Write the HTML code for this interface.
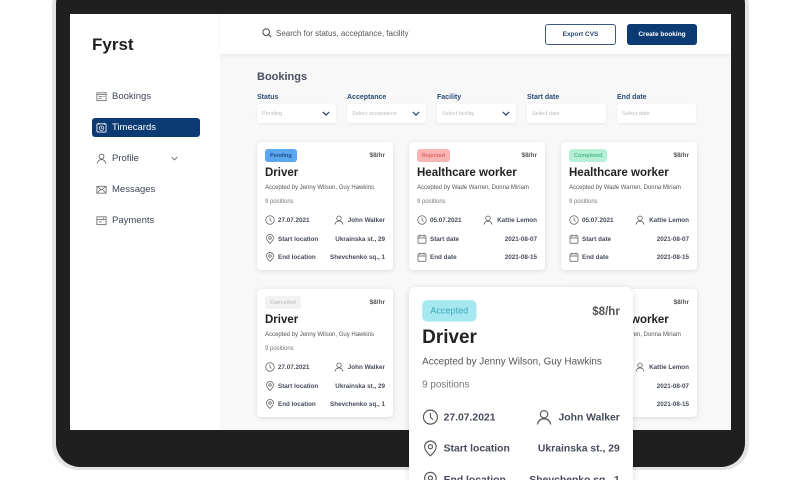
<!DOCTYPE html>
<html style="overflow:hidden;width:800px;height:480px"><head><meta charset="utf-8"><style>
*{margin:0;padding:0;box-sizing:border-box}
body{width:800px;height:480px;overflow:hidden;background:#fff;font-family:"Liberation Sans",sans-serif;position:relative;color:#333}
.abs{position:absolute}
#clip{position:absolute;left:0;top:0;width:800px;height:480px;overflow:hidden}
#outer{left:52px;top:-20px;width:697px;height:490px;background:#e4e4e4;border-radius:26px}
#bezel{left:56px;top:-20px;width:689px;height:487px;background:#1f1f1f;border-radius:24px}
#screen{left:70px;top:14px;width:661px;height:416px;background:#f8f8f8;overflow:hidden}
#side{left:0;top:0;width:150px;height:416px;background:#fff}
#head{left:150px;top:0;width:511px;height:40px;background:#fff;box-shadow:0 2px 5px rgba(0,0,0,.06)}
.nav{position:absolute;left:22px;width:108px;height:19px;font-size:9.5px;color:#3d4656;display:flex;align-items:center;padding-left:4px;gap:5px}
.nav svg{width:11px;height:11px}
.btn{position:absolute;top:10px;height:21px;border-radius:3px;font-size:6.5px;display:flex;align-items:center;justify-content:center;font-weight:bold}
.lbl{position:absolute;top:80px;font-size:7px;font-weight:bold;color:#2b4a75}
.inp{position:absolute;top:90px;width:79px;height:19px;background:#fff;border-radius:3px;box-shadow:0 1px 3px rgba(0,0,0,.07);font-size:5.5px;color:#bbb;padding-left:5px;display:flex;align-items:center}
.inp svg{position:absolute;right:6px;top:7px;width:8px;height:5px}
.card{position:absolute;width:136px;height:128px;background:#fff;border-radius:4px;box-shadow:0 1px 5px rgba(0,0,0,.12);color:#3b4250}
.card .bd{position:absolute;left:8px;top:7px;height:13px;padding:0 5px;border-radius:3px;font-size:5.5px;font-weight:bold;display:flex;align-items:center}
.card .pr{position:absolute;right:8px;top:10px;font-size:6.5px;font-weight:bold;color:#555}
.card .t{position:absolute;left:8px;top:25px;font-size:11.5px;font-weight:bold;color:#222}
.card .a{position:absolute;left:8px;top:43px;font-size:6px;color:#555;white-space:nowrap}
.card .p{position:absolute;left:8px;top:57px;font-size:6px;color:#777}
.card .r{position:absolute;left:8px;right:8px;height:12px;font-size:6.3px;font-weight:bold;color:#454c58;display:flex;align-items:center;white-space:nowrap}
.card .r svg{width:10px;height:10px;margin-right:3px;flex:none}
.card .r .rt{margin-left:auto;display:flex;align-items:center}
.card .r .rt svg{margin-right:4px}
</style></head><body>
<svg width="0" height="0" style="position:absolute">
<defs>
<symbol id="clk" viewBox="0 0 20 20"><circle cx="10" cy="10" r="8.5" fill="none" stroke="#555" stroke-width="1.4"/><path d="M10 5v5l3 3" fill="none" stroke="#555" stroke-width="1.4"/></symbol>
<symbol id="usr" viewBox="0 0 20 20"><circle cx="10" cy="6.5" r="4.5" fill="none" stroke="#555" stroke-width="1.4"/><path d="M2 19c1-5 4-7 8-7s7 2 8 7" fill="none" stroke="#555" stroke-width="1.4"/></symbol>
<symbol id="pin" viewBox="0 0 20 20"><path d="M10 19c-4-4-7-7-7-11a7 7 0 0114 0c0 4-3 7-7 11z" fill="none" stroke="#555" stroke-width="1.4"/><circle cx="10" cy="8" r="2.5" fill="none" stroke="#555" stroke-width="1.4"/></symbol>
<symbol id="cal" viewBox="0 0 20 20"><rect x="2" y="3.5" width="16" height="15" rx="1.5" fill="none" stroke="#555" stroke-width="1.4"/><path d="M2 8h16M6 1.5v4M14 1.5v4" fill="none" stroke="#555" stroke-width="1.4"/></symbol>
<symbol id="chev" viewBox="0 0 10 6"><path d="M1 1l4 4 4-4" fill="none" stroke="#2b4a75" stroke-width="1.5"/></symbol>
</defs></svg>
<div id="clip">
<div id="outer" class="abs"></div>
<div id="bezel" class="abs"></div>
<div id="screen" class="abs">
 <div id="side" class="abs">
  <div class="abs" style="left:22px;top:21px;font-size:17px;font-weight:bold;color:#1e1e1e">Fyrst</div>
  <div class="nav" style="top:73px"><svg viewBox="0 0 12 12"><rect x="1" y="2" width="10" height="8.5" fill="none" stroke="#666" stroke-width=".9"/><path d="M1 4h10M3 6h4M3 8h3M8 6h1.5" stroke="#666" stroke-width=".8"/></svg>Bookings</div>
  <div class="nav" style="top:104px;background:#0c3b73;color:#fff;border-radius:3px"><svg viewBox="0 0 12 12"><rect x="1" y="2" width="10" height="9" rx="1" fill="none" stroke="#fff" stroke-width=".9"/><circle cx="6" cy="6.7" r="2.5" fill="none" stroke="#fff" stroke-width=".8"/><path d="M6 5.5v1.3l1 .6M3 1v2M9 1v2" stroke="#fff" stroke-width=".8"/></svg>Timecards</div>
  <div class="nav" style="top:135px"><svg viewBox="0 0 20 20"><use href="#usr"/></svg>Profile<svg style="width:7px;height:5px;margin-left:27px" viewBox="0 0 10 6"><path d="M1 1l4 4 4-4" fill="none" stroke="#666" stroke-width="1.3"/></svg></div>
  <div class="nav" style="top:166px"><svg viewBox="0 0 12 12"><rect x="1" y="2.5" width="10" height="7.5" fill="none" stroke="#666" stroke-width=".9"/><path d="M1 2.5l5 4 5-4M1 10l4-4M11 10l-4-4" fill="none" stroke="#666" stroke-width=".8"/></svg>Messages</div>
  <div class="nav" style="top:197px"><svg viewBox="0 0 12 12"><rect x="1" y="2" width="10" height="8.5" fill="none" stroke="#666" stroke-width=".9"/><path d="M1 5h10M3 7.5h3M8 3v2" stroke="#666" stroke-width=".8"/></svg>Payments</div>
 </div>
 <div id="head" class="abs">
  <svg class="abs" style="left:42px;top:14px;width:10px;height:10px" viewBox="0 0 12 12"><circle cx="5" cy="5" r="4" fill="none" stroke="#444" stroke-width="1.2"/><path d="M8 8l3 3" stroke="#444" stroke-width="1.2"/></svg>
  <div class="abs" style="left:56px;top:15px;font-size:8px;color:#555">Search for status, acceptance, facility</div>
  <div class="btn" style="left:325px;width:71px;border:1px solid #3a5a85;color:#2b4a75">Export CVS</div>
  <div class="btn" style="left:407px;width:70px;background:#0c3b73;color:#fff">Create booking</div>
 </div>
 <div class="abs" style="left:187px;top:57px;font-size:11px;font-weight:bold;color:#4a5262">Bookings</div>
 <div class="lbl" style="left:187px">Status</div><div class="lbl" style="left:277px">Acceptance</div><div class="lbl" style="left:367px">Facility</div><div class="lbl" style="left:457px">Start date</div><div class="lbl" style="left:547px">End date</div>
 <div class="inp" style="left:187px">Pending<svg viewBox="0 0 10 6"><use href="#chev"/></svg></div>
 <div class="inp" style="left:277px">Select acceptance<svg viewBox="0 0 10 6"><use href="#chev"/></svg></div>
 <div class="inp" style="left:367px">Select facility<svg viewBox="0 0 10 6"><use href="#chev"/></svg></div>
 <div class="inp" style="left:457px">Select date</div>
 <div class="inp" style="left:547px">Select date</div>

 <div class="card" style="left:187px;top:128px"><div class="bd" style="background:#5aa6f0;color:#1d4f8a">Pending</div><div class="pr">$8/hr</div><div class="t">Driver</div><div class="a">Accepted by Jenny Wilson, Guy Hawkins</div><div class="p">9 positions</div>
  <div class="r" style="top:72px"><svg><use href="#clk"/></svg>27.07.2021<span class="rt"><svg><use href="#usr"/></svg>John Walker</span></div>
  <div class="r" style="top:91px"><svg><use href="#pin"/></svg>Start location<span class="rt">Ukrainska st., 29</span></div>
  <div class="r" style="top:109px"><svg><use href="#pin"/></svg>End location<span class="rt">Shevchenko sq., 1</span></div></div>
 <div class="card" style="left:339px;top:128px"><div class="bd" style="background:#f9b4b4;color:#d66">Rejected</div><div class="pr">$8/hr</div><div class="t">Healthcare worker</div><div class="a">Accepted by Wade Warren, Donna Miriam</div><div class="p">9 positions</div>
  <div class="r" style="top:72px"><svg><use href="#clk"/></svg>05.07.2021<span class="rt"><svg><use href="#usr"/></svg>Kattie Lemon</span></div>
  <div class="r" style="top:91px"><svg><use href="#cal"/></svg>Start date<span class="rt">2021-08-07</span></div>
  <div class="r" style="top:109px"><svg><use href="#cal"/></svg>End date<span class="rt">2021-08-15</span></div></div>
 <div class="card" style="left:491px;top:128px"><div class="bd" style="background:#b5f0d6;color:#4cba8a">Completed</div><div class="pr">$8/hr</div><div class="t">Healthcare worker</div><div class="a">Accepted by Wade Warren, Donna Miriam</div><div class="p">9 positions</div>
  <div class="r" style="top:72px"><svg><use href="#clk"/></svg>05.07.2021<span class="rt"><svg><use href="#usr"/></svg>Kattie Lemon</span></div>
  <div class="r" style="top:91px"><svg><use href="#cal"/></svg>Start date<span class="rt">2021-08-07</span></div>
  <div class="r" style="top:109px"><svg><use href="#cal"/></svg>End date<span class="rt">2021-08-15</span></div></div>
 <div class="card" style="left:187px;top:275px"><div class="bd" style="background:#f1f2f4;color:#c8c8c8">Cancelled</div><div class="pr">$8/hr</div><div class="t">Driver</div><div class="a">Accepted by Jenny Wilson, Guy Hawkins</div><div class="p">9 positions</div>
  <div class="r" style="top:72px"><svg><use href="#clk"/></svg>27.07.2021<span class="rt"><svg><use href="#usr"/></svg>John Walker</span></div>
  <div class="r" style="top:91px"><svg><use href="#pin"/></svg>Start location<span class="rt">Ukrainska st., 29</span></div>
  <div class="r" style="top:109px"><svg><use href="#pin"/></svg>End location<span class="rt">Shevchenko sq., 1</span></div></div>
 <div class="card" style="left:491px;top:275px"><div class="bd" style="background:#b5f0d6;color:#4cba8a">Completed</div><div class="pr">$8/hr</div><div class="t">Healthcare worker</div><div class="a">Accepted by Wade Warren, Donna Miriam</div><div class="p">9 positions</div>
  <div class="r" style="top:72px"><svg><use href="#clk"/></svg>05.07.2021<span class="rt"><svg><use href="#usr"/></svg>Kattie Lemon</span></div>
  <div class="r" style="top:91px"><svg><use href="#cal"/></svg>Start date<span class="rt">2021-08-07</span></div>
  <div class="r" style="top:109px"><svg><use href="#cal"/></svg>End date<span class="rt">2021-08-15</span></div></div>
</div>

<div class="card" style="left:409px;top:287px;transform:scale(1.647);transform-origin:0 0;box-shadow:0 1px 4px rgba(0,0,0,.15)"><div class="bd" style="background:#a6e8f0;color:#3aa7b8;top:8px;font-weight:normal">Accepted</div><div class="pr" style="top:12px;font-size:7px">$8/hr</div><div class="t">Driver</div><div class="a">Accepted by Jenny Wilson, Guy Hawkins</div><div class="p">9 positions</div>
  <div class="r" style="top:73px"><svg><use href="#clk"/></svg>27.07.2021<span class="rt"><svg><use href="#usr"/></svg>John Walker</span></div>
  <div class="r" style="top:92px"><svg><use href="#pin"/></svg>Start location<span class="rt">Ukrainska st., 29</span></div>
  <div class="r" style="top:111px"><svg><use href="#pin"/></svg>End location<span class="rt">Shevchenko sq., 1</span></div></div>
</div>
</body></html>
